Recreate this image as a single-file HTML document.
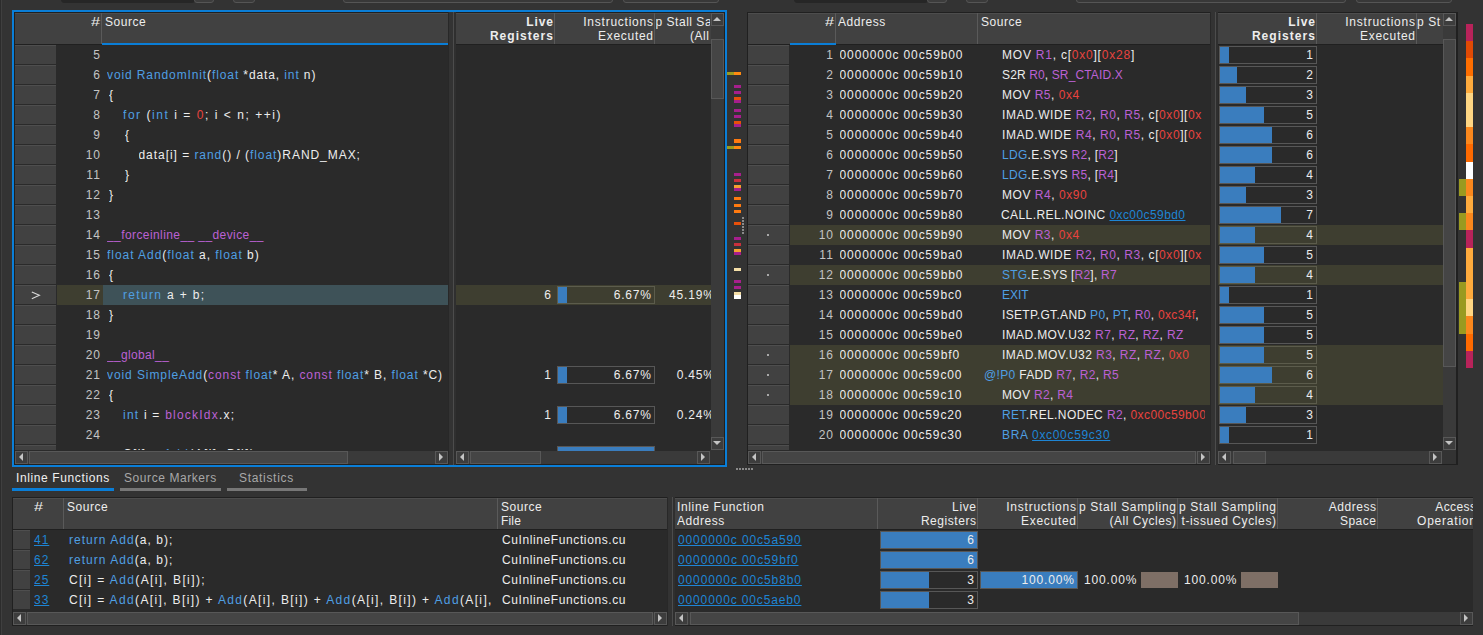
<!DOCTYPE html>
<html><head><meta charset="utf-8"><style>
html,body{margin:0;padding:0;width:1483px;height:635px;overflow:hidden;background:#333333}
body{position:relative;font-family:"Liberation Sans",sans-serif;font-size:12.0px}
body div{position:absolute;box-sizing:content-box}
.t{white-space:pre}
</style></head><body>
<div style="left:0px;top:0px;width:1483px;height:635px;background:#333333;"></div>
<div style="left:1px;top:0px;width:1px;height:635px;background:#3f3f3f;"></div>
<div style="left:0px;top:0px;width:1px;height:635px;background:#2c2c2c;"></div>
<div style="left:61px;top:-4px;width:132px;height:5px;border:1px solid #262626;background:#262626;border-radius:3px;"></div>
<div style="left:194px;top:-4px;width:18px;height:5px;border:1px solid #555555;background:#3c3c3c;border-radius:3px;"></div>
<div style="left:233px;top:-4px;width:20px;height:5px;border:1px solid #555555;background:#3a3a3a;border-radius:3px;"></div>
<div style="left:343px;top:-4px;width:268px;height:5px;border:1px solid #555555;background:#383838;border-radius:3px;"></div>
<div style="left:623px;top:-4px;width:94px;height:5px;border:1px solid #555555;background:#383838;border-radius:3px;"></div>
<div style="left:794px;top:-4px;width:132px;height:5px;border:1px solid #262626;background:#262626;border-radius:3px;"></div>
<div style="left:927px;top:-4px;width:18px;height:5px;border:1px solid #555555;background:#3c3c3c;border-radius:3px;"></div>
<div style="left:966px;top:-4px;width:20px;height:5px;border:1px solid #555555;background:#3a3a3a;border-radius:3px;"></div>
<div style="left:1076px;top:-4px;width:268px;height:5px;border:1px solid #555555;background:#383838;border-radius:3px;"></div>
<div style="left:1356px;top:-4px;width:94px;height:5px;border:1px solid #555555;background:#383838;border-radius:3px;"></div>
<div style="left:12px;top:10px;width:715px;height:457px;background:#0a7ed7;"></div>
<div style="left:14px;top:12px;width:711px;height:453px;background:#202020;"></div>
<div style="left:15px;top:13px;width:433px;height:438px;background:#2a2a2a;"></div>
<div style="left:15px;top:13px;width:87px;height:31px;background:#414141;"></div>
<div style="left:15px;top:13px;width:87px;height:1px;background:#4d4d4d;"></div>
<div style="left:101px;top:13px;width:1px;height:31px;background:#5a5a5a;"></div>
<div class="t" style="left:91px;top:12px;height:20px;line-height:20px;color:#ededed;transform:scaleX(1.35);transform-origin:0 0">#</div>
<div style="left:102px;top:13px;width:346px;height:31px;background:#414141;"></div>
<div style="left:102px;top:13px;width:346px;height:1px;background:#4d4d4d;"></div>
<div class="t" style="top:12px;height:20px;line-height:20px;letter-spacing:0.533px;color:#ededed;left:105px;width:342px;overflow:hidden;">Source</div>
<div style="left:15px;top:44px;width:433px;height:1px;background:#202020;"></div>
<div style="left:102px;top:43px;width:346px;height:2px;background:#0a7ed7;"></div>
<div style="left:15px;top:45px;width:41px;height:19px;background:#414141;"></div>
<div style="left:15px;top:45px;width:41px;height:1px;background:#4e4e4e;"></div>
<div class="t" style="top:45px;height:20px;line-height:20px;letter-spacing:0.961px;color:#c4c4c4;left:56.96px;width:44px;text-align:right;overflow:hidden;">5</div>
<div style="left:15px;top:65px;width:41px;height:19px;background:#414141;"></div>
<div style="left:15px;top:65px;width:41px;height:1px;background:#4e4e4e;"></div>
<div class="t" style="top:65px;height:20px;line-height:20px;letter-spacing:0.961px;color:#c4c4c4;left:56.96px;width:44px;text-align:right;overflow:hidden;">6</div>
<div class="t" style="top:65px;height:20px;line-height:20px;letter-spacing:0.891px;color:#ededed;left:107px;width:341px;overflow:hidden;"><span style="color:#4f9fe3">void</span> <span style="color:#4f9fe3">RandomInit</span>(<span style="color:#4f9fe3">float</span> *data, <span style="color:#4f9fe3">int</span> n)</div>
<div style="left:15px;top:85px;width:41px;height:19px;background:#414141;"></div>
<div style="left:15px;top:85px;width:41px;height:1px;background:#4e4e4e;"></div>
<div class="t" style="top:85px;height:20px;line-height:20px;letter-spacing:0.961px;color:#c4c4c4;left:56.96px;width:44px;text-align:right;overflow:hidden;">7</div>
<div class="t" style="top:85px;height:20px;line-height:20px;letter-spacing:3.627px;color:#ededed;left:109px;width:339px;overflow:hidden;">{</div>
<div style="left:15px;top:105px;width:41px;height:19px;background:#414141;"></div>
<div style="left:15px;top:105px;width:41px;height:1px;background:#4e4e4e;"></div>
<div class="t" style="top:105px;height:20px;line-height:20px;letter-spacing:0.961px;color:#c4c4c4;left:56.96px;width:44px;text-align:right;overflow:hidden;">8</div>
<div class="t" style="top:105px;height:20px;line-height:20px;letter-spacing:1.543px;color:#ededed;left:123px;width:325px;overflow:hidden;"><span style="color:#4f9fe3">for</span> (<span style="color:#4f9fe3">int</span> i = <span style="color:#e8433f">0</span>; i &lt; n; ++i)</div>
<div style="left:15px;top:125px;width:41px;height:19px;background:#414141;"></div>
<div style="left:15px;top:125px;width:41px;height:1px;background:#4e4e4e;"></div>
<div class="t" style="top:125px;height:20px;line-height:20px;letter-spacing:0.961px;color:#c4c4c4;left:56.96px;width:44px;text-align:right;overflow:hidden;">9</div>
<div class="t" style="top:125px;height:20px;line-height:20px;letter-spacing:3.627px;color:#ededed;left:125px;width:323px;overflow:hidden;">{</div>
<div style="left:15px;top:145px;width:41px;height:19px;background:#414141;"></div>
<div style="left:15px;top:145px;width:41px;height:1px;background:#4e4e4e;"></div>
<div class="t" style="top:145px;height:20px;line-height:20px;letter-spacing:0.961px;color:#c4c4c4;left:56.96px;width:44px;text-align:right;overflow:hidden;">10</div>
<div class="t" style="top:145px;height:20px;line-height:20px;letter-spacing:0.951px;color:#ededed;left:138.5px;width:309.5px;overflow:hidden;">data[i] = <span style="color:#4f9fe3">rand</span>() / (<span style="color:#4f9fe3">float</span>)RAND_MAX;</div>
<div style="left:15px;top:165px;width:41px;height:19px;background:#414141;"></div>
<div style="left:15px;top:165px;width:41px;height:1px;background:#4e4e4e;"></div>
<div class="t" style="top:165px;height:20px;line-height:20px;letter-spacing:1.406px;color:#c4c4c4;left:57.41px;width:44px;text-align:right;overflow:hidden;">11</div>
<div class="t" style="top:165px;height:20px;line-height:20px;letter-spacing:3.627px;color:#ededed;left:125px;width:323px;overflow:hidden;">}</div>
<div style="left:15px;top:185px;width:41px;height:19px;background:#414141;"></div>
<div style="left:15px;top:185px;width:41px;height:1px;background:#4e4e4e;"></div>
<div class="t" style="top:185px;height:20px;line-height:20px;letter-spacing:0.961px;color:#c4c4c4;left:56.96px;width:44px;text-align:right;overflow:hidden;">12</div>
<div class="t" style="top:185px;height:20px;line-height:20px;letter-spacing:3.627px;color:#ededed;left:109px;width:339px;overflow:hidden;">}</div>
<div style="left:15px;top:205px;width:41px;height:19px;background:#414141;"></div>
<div style="left:15px;top:205px;width:41px;height:1px;background:#4e4e4e;"></div>
<div class="t" style="top:205px;height:20px;line-height:20px;letter-spacing:0.961px;color:#c4c4c4;left:56.96px;width:44px;text-align:right;overflow:hidden;">13</div>
<div style="left:15px;top:225px;width:41px;height:19px;background:#414141;"></div>
<div style="left:15px;top:225px;width:41px;height:1px;background:#4e4e4e;"></div>
<div class="t" style="top:225px;height:20px;line-height:20px;letter-spacing:0.961px;color:#c4c4c4;left:56.96px;width:44px;text-align:right;overflow:hidden;">14</div>
<div class="t" style="top:225px;height:20px;line-height:20px;letter-spacing:0.412px;color:#ededed;left:107px;width:341px;overflow:hidden;"><span style="color:#bb61d4">__forceinline__ __device__</span></div>
<div style="left:15px;top:245px;width:41px;height:19px;background:#414141;"></div>
<div style="left:15px;top:245px;width:41px;height:1px;background:#4e4e4e;"></div>
<div class="t" style="top:245px;height:20px;line-height:20px;letter-spacing:0.961px;color:#c4c4c4;left:56.96px;width:44px;text-align:right;overflow:hidden;">15</div>
<div class="t" style="top:245px;height:20px;line-height:20px;letter-spacing:0.956px;color:#ededed;left:107px;width:341px;overflow:hidden;"><span style="color:#4f9fe3">float</span> <span style="color:#4f9fe3">Add</span>(<span style="color:#4f9fe3">float</span> a, <span style="color:#4f9fe3">float</span> b)</div>
<div style="left:15px;top:265px;width:41px;height:19px;background:#414141;"></div>
<div style="left:15px;top:265px;width:41px;height:1px;background:#4e4e4e;"></div>
<div class="t" style="top:265px;height:20px;line-height:20px;letter-spacing:0.961px;color:#c4c4c4;left:56.96px;width:44px;text-align:right;overflow:hidden;">16</div>
<div class="t" style="top:265px;height:20px;line-height:20px;letter-spacing:3.627px;color:#ededed;left:109px;width:339px;overflow:hidden;">{</div>
<div style="left:57px;top:285px;width:46px;height:20px;background:#3e3e30;"></div>
<div style="left:103px;top:285px;width:345px;height:20px;background:#3e5258;"></div>
<div style="left:15px;top:285px;width:41px;height:19px;background:#414141;"></div>
<div style="left:15px;top:285px;width:41px;height:1px;background:#4e4e4e;"></div>
<svg style="position:absolute;left:31px;top:291px" width="10" height="9" viewBox="0 0 10 9"><path d="M0.8 0.9 L8.4 4.3 L0.8 7.7" fill="none" stroke="#d8d8d8" stroke-width="1.1"/></svg>
<div class="t" style="top:285px;height:20px;line-height:20px;letter-spacing:0.961px;color:#c4c4c4;left:56.96px;width:44px;text-align:right;overflow:hidden;">17</div>
<div class="t" style="top:285px;height:20px;line-height:20px;letter-spacing:1.330px;color:#ededed;left:123px;width:325px;overflow:hidden;"><span style="color:#4f9fe3">return</span> a + b;</div>
<div style="left:15px;top:305px;width:41px;height:19px;background:#414141;"></div>
<div style="left:15px;top:305px;width:41px;height:1px;background:#4e4e4e;"></div>
<div class="t" style="top:305px;height:20px;line-height:20px;letter-spacing:0.961px;color:#c4c4c4;left:56.96px;width:44px;text-align:right;overflow:hidden;">18</div>
<div class="t" style="top:305px;height:20px;line-height:20px;letter-spacing:3.627px;color:#ededed;left:109px;width:339px;overflow:hidden;">}</div>
<div style="left:15px;top:325px;width:41px;height:19px;background:#414141;"></div>
<div style="left:15px;top:325px;width:41px;height:1px;background:#4e4e4e;"></div>
<div class="t" style="top:325px;height:20px;line-height:20px;letter-spacing:0.961px;color:#c4c4c4;left:56.96px;width:44px;text-align:right;overflow:hidden;">19</div>
<div style="left:15px;top:345px;width:41px;height:19px;background:#414141;"></div>
<div style="left:15px;top:345px;width:41px;height:1px;background:#4e4e4e;"></div>
<div class="t" style="top:345px;height:20px;line-height:20px;letter-spacing:0.961px;color:#c4c4c4;left:56.96px;width:44px;text-align:right;overflow:hidden;">20</div>
<div class="t" style="top:345px;height:20px;line-height:20px;letter-spacing:0.342px;color:#ededed;left:107px;width:341px;overflow:hidden;"><span style="color:#bb61d4">__global__</span></div>
<div style="left:15px;top:365px;width:41px;height:19px;background:#414141;"></div>
<div style="left:15px;top:365px;width:41px;height:1px;background:#4e4e4e;"></div>
<div class="t" style="top:365px;height:20px;line-height:20px;letter-spacing:0.961px;color:#c4c4c4;left:56.96px;width:44px;text-align:right;overflow:hidden;">21</div>
<div class="t" style="top:365px;height:20px;line-height:20px;letter-spacing:0.913px;color:#ededed;left:107px;width:341px;overflow:hidden;"><span style="color:#4f9fe3">void</span> <span style="color:#4f9fe3">SimpleAdd</span>(<span style="color:#bb61d4">const</span> <span style="color:#4f9fe3">float</span>* A, <span style="color:#bb61d4">const</span> <span style="color:#4f9fe3">float</span>* B, <span style="color:#4f9fe3">float</span> *C)</div>
<div style="left:15px;top:385px;width:41px;height:19px;background:#414141;"></div>
<div style="left:15px;top:385px;width:41px;height:1px;background:#4e4e4e;"></div>
<div class="t" style="top:385px;height:20px;line-height:20px;letter-spacing:0.961px;color:#c4c4c4;left:56.96px;width:44px;text-align:right;overflow:hidden;">22</div>
<div class="t" style="top:385px;height:20px;line-height:20px;letter-spacing:3.627px;color:#ededed;left:109px;width:339px;overflow:hidden;">{</div>
<div style="left:15px;top:405px;width:41px;height:19px;background:#414141;"></div>
<div style="left:15px;top:405px;width:41px;height:1px;background:#4e4e4e;"></div>
<div class="t" style="top:405px;height:20px;line-height:20px;letter-spacing:0.961px;color:#c4c4c4;left:56.96px;width:44px;text-align:right;overflow:hidden;">23</div>
<div class="t" style="top:405px;height:20px;line-height:20px;letter-spacing:1.220px;color:#ededed;left:123px;width:325px;overflow:hidden;"><span style="color:#4f9fe3">int</span> i = <span style="color:#bb61d4">blockIdx</span>.x;</div>
<div style="left:15px;top:425px;width:41px;height:19px;background:#414141;"></div>
<div style="left:15px;top:425px;width:41px;height:1px;background:#4e4e4e;"></div>
<div class="t" style="top:425px;height:20px;line-height:20px;letter-spacing:0.961px;color:#c4c4c4;left:56.96px;width:44px;text-align:right;overflow:hidden;">24</div>
<div style="left:15px;top:445px;width:433px;height:5px;overflow:hidden">
<div style="left:0px;top:0px;width:41px;height:5px;background:#414141;"></div>
<div style="left:0px;top:0px;width:41px;height:1px;background:#4e4e4e;"></div>
<div class="t" style="top:-1px;height:20px;line-height:20px;letter-spacing:1.389px;color:#ededed;left:108px;">C[i] = <span style="color:#4f9fe3">Add</span>(A[i], B[i]);</div>
</div>
<div style="left:15px;top:451px;width:433px;height:13px;background:#3a3a3a;"></div>
<div style="left:15px;top:451px;width:11px;height:11px;border:1px solid #585858;background:#3d3d3d;"></div>
<div style="left:19px;top:453px;width:0;height:0;border-top:4px solid transparent;border-bottom:4px solid transparent;border-right:4.5px solid #c4c4c4"></div>
<div style="left:29px;top:451px;width:317px;height:11px;border:1px solid #585858;background:#454545;"></div>
<div style="left:435px;top:451px;width:11px;height:11px;border:1px solid #585858;background:#3d3d3d;"></div>
<div style="left:439px;top:453px;width:0;height:0;border-top:4px solid transparent;border-bottom:4px solid transparent;border-left:4.5px solid #c4c4c4"></div>
<div style="left:448px;top:12px;width:8px;height:453px;background:#333333;"></div>
<div style="left:448px;top:12px;width:1px;height:453px;background:#282828;"></div>
<div style="left:453px;top:12px;width:1px;height:453px;background:#4c4c4c;"></div>
<div style="left:454px;top:12px;width:2px;height:453px;background:#2f2f2f;"></div>
<div style="left:456px;top:13px;width:255px;height:438px;background:#2a2a2a;"></div>
<div style="left:456px;top:13px;width:99px;height:31px;background:#414141;"></div>
<div style="left:456px;top:13px;width:99px;height:1px;background:#4d4d4d;"></div>
<div style="left:554px;top:13px;width:1px;height:31px;background:#5a5a5a;"></div>
<div class="t" style="top:12px;height:20px;line-height:20px;letter-spacing:0.928px;color:#ededed;font-weight:bold;left:456.93px;width:97px;text-align:right;overflow:hidden;">Live</div>
<div class="t" style="top:26px;height:20px;line-height:20px;letter-spacing:1.052px;color:#ededed;font-weight:bold;left:457.05px;width:97px;text-align:right;overflow:hidden;">Registers</div>
<div style="left:555px;top:13px;width:100px;height:31px;background:#414141;"></div>
<div style="left:555px;top:13px;width:100px;height:1px;background:#4d4d4d;"></div>
<div style="left:654px;top:13px;width:1px;height:31px;background:#5a5a5a;"></div>
<div class="t" style="top:12px;height:20px;line-height:20px;letter-spacing:0.760px;color:#ededed;left:555.76px;width:98px;text-align:right;overflow:hidden;">Instructions</div>
<div class="t" style="top:26px;height:20px;line-height:20px;letter-spacing:0.697px;color:#ededed;left:555.70px;width:98px;text-align:right;overflow:hidden;">Executed</div>
<div style="left:655px;top:13px;width:56px;height:31px;background:#414141;"></div>
<div style="left:655px;top:13px;width:56px;height:1px;background:#4d4d4d;"></div>
<div class="t" style="top:12px;height:20px;line-height:20px;letter-spacing:0.520px;color:#ededed;left:655.52px;width:54px;text-align:right;overflow:hidden;">p Stall Sa</div>
<div class="t" style="top:26px;height:20px;line-height:20px;letter-spacing:0.557px;color:#ededed;left:655.56px;width:54px;text-align:right;overflow:hidden;">(All</div>
<div style="left:456px;top:44px;width:255px;height:1px;background:#202020;"></div>
<div style="left:456px;top:285px;width:255px;height:20px;background:#3e3e30;"></div>
<div class="t" style="top:285px;height:20px;line-height:20px;letter-spacing:0.961px;color:#ededed;left:461.96px;width:90px;text-align:right;overflow:hidden;">6</div>
<div style="left:557px;top:286px;width:96px;height:16px;border:1px solid #5c5c4c;background:transparent;"></div>
<div style="left:558px;top:287px;width:9px;height:16px;background:#3a7dbe;"></div>
<div class="t" style="top:285px;height:20px;line-height:20px;letter-spacing:0.819px;color:#ededed;left:557.82px;width:94px;text-align:right;overflow:hidden;">6.67%</div>
<div class="t" style="top:285px;height:20px;line-height:20px;letter-spacing:0.843px;color:#ededed;left:658.84px;width:56px;text-align:right;overflow:hidden;">45.19%</div>
<div class="t" style="top:365px;height:20px;line-height:20px;letter-spacing:0.961px;color:#ededed;left:461.96px;width:90px;text-align:right;overflow:hidden;">1</div>
<div style="left:557px;top:366px;width:96px;height:16px;border:1px solid #575757;background:transparent;"></div>
<div style="left:558px;top:367px;width:9px;height:16px;background:#3a7dbe;"></div>
<div class="t" style="top:365px;height:20px;line-height:20px;letter-spacing:0.819px;color:#ededed;left:557.82px;width:94px;text-align:right;overflow:hidden;">6.67%</div>
<div class="t" style="top:365px;height:20px;line-height:20px;letter-spacing:0.819px;color:#ededed;left:658.82px;width:56px;text-align:right;overflow:hidden;">0.45%</div>
<div class="t" style="top:405px;height:20px;line-height:20px;letter-spacing:0.961px;color:#ededed;left:461.96px;width:90px;text-align:right;overflow:hidden;">1</div>
<div style="left:557px;top:406px;width:96px;height:16px;border:1px solid #575757;background:transparent;"></div>
<div style="left:558px;top:407px;width:9px;height:16px;background:#3a7dbe;"></div>
<div class="t" style="top:405px;height:20px;line-height:20px;letter-spacing:0.819px;color:#ededed;left:557.82px;width:94px;text-align:right;overflow:hidden;">6.67%</div>
<div class="t" style="top:405px;height:20px;line-height:20px;letter-spacing:0.819px;color:#ededed;left:658.82px;width:56px;text-align:right;overflow:hidden;">0.24%</div>
<div style="left:456px;top:445px;width:255px;height:6px;overflow:hidden">
<div style="left:101px;top:1px;width:96px;height:16px;border:1px solid #575757;background:transparent;"></div>
<div style="left:102px;top:2px;width:96px;height:16px;background:#3a7dbe;"></div>
</div>
<div style="left:456px;top:451px;width:254px;height:13px;background:#3a3a3a;"></div>
<div style="left:456px;top:451px;width:11px;height:11px;border:1px solid #585858;background:#3d3d3d;"></div>
<div style="left:460px;top:453px;width:0;height:0;border-top:4px solid transparent;border-bottom:4px solid transparent;border-right:4.5px solid #c4c4c4"></div>
<div style="left:470px;top:451px;width:69px;height:11px;border:1px solid #585858;background:#454545;"></div>
<div style="left:697px;top:451px;width:11px;height:11px;border:1px solid #585858;background:#3d3d3d;"></div>
<div style="left:701px;top:453px;width:0;height:0;border-top:4px solid transparent;border-bottom:4px solid transparent;border-left:4.5px solid #c4c4c4"></div>
<div style="left:711px;top:13px;width:13px;height:437px;background:#3a3a3a;"></div>
<div style="left:711px;top:13px;width:11px;height:11px;border:1px solid #585858;background:#3d3d3d;"></div>
<div style="left:713px;top:17px;width:0;height:0;border-left:4px solid transparent;border-right:4px solid transparent;border-bottom:4.5px solid #c4c4c4"></div>
<div style="left:711px;top:39px;width:11px;height:58px;border:1px solid #585858;background:#454545;"></div>
<div style="left:711px;top:437px;width:11px;height:11px;border:1px solid #585858;background:#3d3d3d;"></div>
<div style="left:713px;top:441px;width:0;height:0;border-left:4px solid transparent;border-right:4px solid transparent;border-top:4.5px solid #c4c4c4"></div>
<div style="left:710px;top:450px;width:14px;height:14px;background:#333333;"></div>
<div style="left:727px;top:72px;width:7px;height:3px;background:#9a9a20;"></div>
<div style="left:734px;top:72px;width:7px;height:3px;background:#ff8a10;"></div>
<div style="left:734px;top:85px;width:7px;height:3px;background:#a61f8c;"></div>
<div style="left:734px;top:91px;width:7px;height:3px;background:#a61f8c;"></div>
<div style="left:734px;top:97px;width:7px;height:3px;background:#e8500a;"></div>
<div style="left:734px;top:100px;width:7px;height:3px;background:#a61f8c;"></div>
<div style="left:734px;top:109px;width:7px;height:3px;background:#a61f8c;"></div>
<div style="left:734px;top:115px;width:7px;height:3px;background:#a61f8c;"></div>
<div style="left:734px;top:121px;width:7px;height:3px;background:#e8500a;"></div>
<div style="left:734px;top:124px;width:7px;height:3px;background:#a61f8c;"></div>
<div style="left:734px;top:139px;width:7px;height:4px;background:#ff7a10;"></div>
<div style="left:727px;top:146px;width:7px;height:3px;background:#9a9a20;"></div>
<div style="left:734px;top:146px;width:7px;height:3px;background:#ff8a10;"></div>
<div style="left:734px;top:173px;width:7px;height:3px;background:#a61f8c;"></div>
<div style="left:734px;top:179px;width:7px;height:3px;background:#c8303c;"></div>
<div style="left:734px;top:185px;width:7px;height:3px;background:#f5a030;"></div>
<div style="left:734px;top:188px;width:7px;height:3px;background:#a61f8c;"></div>
<div style="left:734px;top:197px;width:7px;height:3px;background:#ff7a10;"></div>
<div style="left:734px;top:204px;width:7px;height:3px;background:#ff7a10;"></div>
<div style="left:734px;top:210px;width:7px;height:3px;background:#ff7a10;"></div>
<div style="left:734px;top:222px;width:7px;height:3px;background:#e8500a;"></div>
<div style="left:734px;top:237px;width:7px;height:3px;background:#a61f8c;"></div>
<div style="left:734px;top:243px;width:7px;height:3px;background:#c8303c;"></div>
<div style="left:734px;top:249px;width:7px;height:3px;background:#f5a030;"></div>
<div style="left:734px;top:252px;width:7px;height:3px;background:#a61f8c;"></div>
<div style="left:734px;top:268px;width:7px;height:3px;background:#f5dfa8;"></div>
<div style="left:734px;top:280px;width:7px;height:3px;background:#a61f8c;"></div>
<div style="left:734px;top:286px;width:7px;height:3px;background:#a61f8c;"></div>
<div style="left:734px;top:292px;width:7px;height:3px;background:#f5dfa8;"></div>
<div style="left:734px;top:295px;width:7px;height:4px;background:#ffffff;"></div>
<div style="left:742px;top:217px;width:2px;height:2px;background:#8a8a8a;"></div>
<div style="left:742px;top:220px;width:2px;height:2px;background:#8a8a8a;"></div>
<div style="left:742px;top:223px;width:2px;height:2px;background:#8a8a8a;"></div>
<div style="left:742px;top:226px;width:2px;height:2px;background:#8a8a8a;"></div>
<div style="left:742px;top:229px;width:2px;height:2px;background:#8a8a8a;"></div>
<div style="left:742px;top:232px;width:2px;height:2px;background:#8a8a8a;"></div>
<div style="left:736px;top:468px;width:2px;height:2px;background:#8a8a8a;"></div>
<div style="left:739px;top:468px;width:2px;height:2px;background:#8a8a8a;"></div>
<div style="left:742px;top:468px;width:2px;height:2px;background:#8a8a8a;"></div>
<div style="left:745px;top:468px;width:2px;height:2px;background:#8a8a8a;"></div>
<div style="left:748px;top:468px;width:2px;height:2px;background:#8a8a8a;"></div>
<div style="left:751px;top:468px;width:2px;height:2px;background:#8a8a8a;"></div>
<div style="left:747px;top:12px;width:711px;height:453px;background:#202020;"></div>
<div style="left:748px;top:13px;width:462px;height:438px;background:#2a2a2a;"></div>
<div style="left:748px;top:13px;width:88px;height:31px;background:#414141;"></div>
<div style="left:748px;top:13px;width:88px;height:1px;background:#4d4d4d;"></div>
<div style="left:835px;top:13px;width:1px;height:31px;background:#5a5a5a;"></div>
<div class="t" style="left:825px;top:12px;height:20px;line-height:20px;color:#ededed;transform:scaleX(1.35);transform-origin:0 0">#</div>
<div style="left:836px;top:13px;width:142px;height:31px;background:#414141;"></div>
<div style="left:836px;top:13px;width:142px;height:1px;background:#4d4d4d;"></div>
<div style="left:977px;top:13px;width:1px;height:31px;background:#5a5a5a;"></div>
<div class="t" style="top:12px;height:20px;line-height:20px;letter-spacing:0.538px;color:#ededed;left:838px;width:139px;overflow:hidden;">Address</div>
<div style="left:978px;top:13px;width:232px;height:31px;background:#414141;"></div>
<div style="left:978px;top:13px;width:232px;height:1px;background:#4d4d4d;"></div>
<div class="t" style="top:12px;height:20px;line-height:20px;letter-spacing:0.533px;color:#ededed;left:981px;width:228px;overflow:hidden;">Source</div>
<div style="left:748px;top:44px;width:462px;height:1px;background:#202020;"></div>
<div style="left:790px;top:43px;width:46px;height:2px;background:#0a7ed7;"></div>
<div style="left:748px;top:45px;width:41px;height:19px;background:#414141;"></div>
<div style="left:748px;top:45px;width:41px;height:1px;background:#4e4e4e;"></div>
<div class="t" style="top:45px;height:20px;line-height:20px;letter-spacing:0.961px;color:#c4c4c4;left:789.96px;width:44px;text-align:right;overflow:hidden;">1</div>
<div class="t" style="top:45px;height:20px;line-height:20px;letter-spacing:0.889px;color:#ededed;left:839.5px;width:137px;overflow:hidden;">0000000c 00c59b00</div>
<div class="t" style="left:1002px;top:45px;width:203px;height:20px;line-height:20px;overflow:hidden;letter-spacing:0.776px;color:#ededed"><span style="color:#ededed">MOV </span><span style="color:#bb61d4">R1</span><span style="color:#ededed">, c[</span><span style="color:#e8433f">0x0</span><span style="color:#ededed">]</span><span style="color:#ededed">[</span><span style="color:#e8433f">0x28</span><span style="color:#ededed">]</span></div>
<div style="left:748px;top:65px;width:41px;height:19px;background:#414141;"></div>
<div style="left:748px;top:65px;width:41px;height:1px;background:#4e4e4e;"></div>
<div class="t" style="top:65px;height:20px;line-height:20px;letter-spacing:0.961px;color:#c4c4c4;left:789.96px;width:44px;text-align:right;overflow:hidden;">2</div>
<div class="t" style="top:65px;height:20px;line-height:20px;letter-spacing:0.889px;color:#ededed;left:839.5px;width:137px;overflow:hidden;">0000000c 00c59b10</div>
<div class="t" style="left:1002px;top:65px;width:203px;height:20px;line-height:20px;overflow:hidden;letter-spacing:0.127px;color:#ededed"><span style="color:#ededed">S2R </span><span style="color:#bb61d4">R0</span><span style="color:#ededed">, </span><span style="color:#bb61d4">SR_CTAID.X</span></div>
<div style="left:748px;top:85px;width:41px;height:19px;background:#414141;"></div>
<div style="left:748px;top:85px;width:41px;height:1px;background:#4e4e4e;"></div>
<div class="t" style="top:85px;height:20px;line-height:20px;letter-spacing:0.961px;color:#c4c4c4;left:789.96px;width:44px;text-align:right;overflow:hidden;">3</div>
<div class="t" style="top:85px;height:20px;line-height:20px;letter-spacing:0.889px;color:#ededed;left:839.5px;width:137px;overflow:hidden;">0000000c 00c59b20</div>
<div class="t" style="left:1002px;top:85px;width:203px;height:20px;line-height:20px;overflow:hidden;letter-spacing:0.505px;color:#ededed"><span style="color:#ededed">MOV </span><span style="color:#bb61d4">R5</span><span style="color:#ededed">, </span><span style="color:#e8433f">0x4</span></div>
<div style="left:748px;top:105px;width:41px;height:19px;background:#414141;"></div>
<div style="left:748px;top:105px;width:41px;height:1px;background:#4e4e4e;"></div>
<div class="t" style="top:105px;height:20px;line-height:20px;letter-spacing:0.961px;color:#c4c4c4;left:789.96px;width:44px;text-align:right;overflow:hidden;">4</div>
<div class="t" style="top:105px;height:20px;line-height:20px;letter-spacing:0.889px;color:#ededed;left:839.5px;width:137px;overflow:hidden;">0000000c 00c59b30</div>
<div class="t" style="left:1002px;top:105px;width:203px;height:20px;line-height:20px;overflow:hidden;letter-spacing:0.571px;color:#ededed"><span style="color:#ededed">IMAD.WIDE </span><span style="color:#bb61d4">R2</span><span style="color:#ededed">, </span><span style="color:#bb61d4">R0</span><span style="color:#ededed">, </span><span style="color:#bb61d4">R5</span><span style="color:#ededed">, c[</span><span style="color:#e8433f">0x0</span><span style="color:#ededed">]</span><span style="color:#ededed">[</span><span style="color:#e8433f">0x</span></div>
<div style="left:748px;top:125px;width:41px;height:19px;background:#414141;"></div>
<div style="left:748px;top:125px;width:41px;height:1px;background:#4e4e4e;"></div>
<div class="t" style="top:125px;height:20px;line-height:20px;letter-spacing:0.961px;color:#c4c4c4;left:789.96px;width:44px;text-align:right;overflow:hidden;">5</div>
<div class="t" style="top:125px;height:20px;line-height:20px;letter-spacing:0.889px;color:#ededed;left:839.5px;width:137px;overflow:hidden;">0000000c 00c59b40</div>
<div class="t" style="left:1002px;top:125px;width:203px;height:20px;line-height:20px;overflow:hidden;letter-spacing:0.571px;color:#ededed"><span style="color:#ededed">IMAD.WIDE </span><span style="color:#bb61d4">R4</span><span style="color:#ededed">, </span><span style="color:#bb61d4">R0</span><span style="color:#ededed">, </span><span style="color:#bb61d4">R5</span><span style="color:#ededed">, c[</span><span style="color:#e8433f">0x0</span><span style="color:#ededed">]</span><span style="color:#ededed">[</span><span style="color:#e8433f">0x</span></div>
<div style="left:748px;top:145px;width:41px;height:19px;background:#414141;"></div>
<div style="left:748px;top:145px;width:41px;height:1px;background:#4e4e4e;"></div>
<div class="t" style="top:145px;height:20px;line-height:20px;letter-spacing:0.961px;color:#c4c4c4;left:789.96px;width:44px;text-align:right;overflow:hidden;">6</div>
<div class="t" style="top:145px;height:20px;line-height:20px;letter-spacing:0.889px;color:#ededed;left:839.5px;width:137px;overflow:hidden;">0000000c 00c59b50</div>
<div class="t" style="left:1002px;top:145px;width:203px;height:20px;line-height:20px;overflow:hidden;letter-spacing:0.280px;color:#ededed"><span style="color:#4f9fe3">LDG</span><span style="color:#ededed">.E.SYS </span><span style="color:#bb61d4">R2</span><span style="color:#ededed">, [</span><span style="color:#bb61d4">R2</span><span style="color:#ededed">]</span></div>
<div style="left:748px;top:165px;width:41px;height:19px;background:#414141;"></div>
<div style="left:748px;top:165px;width:41px;height:1px;background:#4e4e4e;"></div>
<div class="t" style="top:165px;height:20px;line-height:20px;letter-spacing:0.961px;color:#c4c4c4;left:789.96px;width:44px;text-align:right;overflow:hidden;">7</div>
<div class="t" style="top:165px;height:20px;line-height:20px;letter-spacing:0.889px;color:#ededed;left:839.5px;width:137px;overflow:hidden;">0000000c 00c59b60</div>
<div class="t" style="left:1002px;top:165px;width:203px;height:20px;line-height:20px;overflow:hidden;letter-spacing:0.280px;color:#ededed"><span style="color:#4f9fe3">LDG</span><span style="color:#ededed">.E.SYS </span><span style="color:#bb61d4">R5</span><span style="color:#ededed">, [</span><span style="color:#bb61d4">R4</span><span style="color:#ededed">]</span></div>
<div style="left:748px;top:185px;width:41px;height:19px;background:#414141;"></div>
<div style="left:748px;top:185px;width:41px;height:1px;background:#4e4e4e;"></div>
<div class="t" style="top:185px;height:20px;line-height:20px;letter-spacing:0.961px;color:#c4c4c4;left:789.96px;width:44px;text-align:right;overflow:hidden;">8</div>
<div class="t" style="top:185px;height:20px;line-height:20px;letter-spacing:0.889px;color:#ededed;left:839.5px;width:137px;overflow:hidden;">0000000c 00c59b70</div>
<div class="t" style="left:1002px;top:185px;width:203px;height:20px;line-height:20px;overflow:hidden;letter-spacing:0.543px;color:#ededed"><span style="color:#ededed">MOV </span><span style="color:#bb61d4">R4</span><span style="color:#ededed">, </span><span style="color:#e8433f">0x90</span></div>
<div style="left:748px;top:205px;width:41px;height:19px;background:#414141;"></div>
<div style="left:748px;top:205px;width:41px;height:1px;background:#4e4e4e;"></div>
<div class="t" style="top:205px;height:20px;line-height:20px;letter-spacing:0.961px;color:#c4c4c4;left:789.96px;width:44px;text-align:right;overflow:hidden;">9</div>
<div class="t" style="top:205px;height:20px;line-height:20px;letter-spacing:0.889px;color:#ededed;left:839.5px;width:137px;overflow:hidden;">0000000c 00c59b80</div>
<div class="t" style="left:1001px;top:205px;width:204px;height:20px;line-height:20px;overflow:hidden;letter-spacing:0.425px;color:#ededed"><span style="color:#ededed">CALL.REL.NOINC </span><span style="color:#1e85d4;text-decoration:underline">0xc00c59bd0</span></div>
<div style="left:790px;top:225px;width:420px;height:20px;background:#3e3e30;"></div>
<div style="left:748px;top:225px;width:41px;height:19px;background:#414141;"></div>
<div style="left:748px;top:225px;width:41px;height:1px;background:#4e4e4e;"></div>
<div style="left:767px;top:234px;width:2px;height:2px;background:#a8a8a8;"></div>
<div class="t" style="top:225px;height:20px;line-height:20px;letter-spacing:0.961px;color:#c4c4c4;left:789.96px;width:44px;text-align:right;overflow:hidden;">10</div>
<div class="t" style="top:225px;height:20px;line-height:20px;letter-spacing:0.889px;color:#ededed;left:839.5px;width:137px;overflow:hidden;">0000000c 00c59b90</div>
<div class="t" style="left:1002px;top:225px;width:203px;height:20px;line-height:20px;overflow:hidden;letter-spacing:0.505px;color:#ededed"><span style="color:#ededed">MOV </span><span style="color:#bb61d4">R3</span><span style="color:#ededed">, </span><span style="color:#e8433f">0x4</span></div>
<div style="left:748px;top:245px;width:41px;height:19px;background:#414141;"></div>
<div style="left:748px;top:245px;width:41px;height:1px;background:#4e4e4e;"></div>
<div class="t" style="top:245px;height:20px;line-height:20px;letter-spacing:1.406px;color:#c4c4c4;left:790.41px;width:44px;text-align:right;overflow:hidden;">11</div>
<div class="t" style="top:245px;height:20px;line-height:20px;letter-spacing:0.872px;color:#ededed;left:839.5px;width:137px;overflow:hidden;">0000000c 00c59ba0</div>
<div class="t" style="left:1002px;top:245px;width:203px;height:20px;line-height:20px;overflow:hidden;letter-spacing:0.571px;color:#ededed"><span style="color:#ededed">IMAD.WIDE </span><span style="color:#bb61d4">R2</span><span style="color:#ededed">, </span><span style="color:#bb61d4">R0</span><span style="color:#ededed">, </span><span style="color:#bb61d4">R3</span><span style="color:#ededed">, c[</span><span style="color:#e8433f">0x0</span><span style="color:#ededed">]</span><span style="color:#ededed">[</span><span style="color:#e8433f">0x</span></div>
<div style="left:790px;top:265px;width:420px;height:20px;background:#3e3e30;"></div>
<div style="left:748px;top:265px;width:41px;height:19px;background:#414141;"></div>
<div style="left:748px;top:265px;width:41px;height:1px;background:#4e4e4e;"></div>
<div style="left:767px;top:274px;width:2px;height:2px;background:#a8a8a8;"></div>
<div class="t" style="top:265px;height:20px;line-height:20px;letter-spacing:0.961px;color:#c4c4c4;left:789.96px;width:44px;text-align:right;overflow:hidden;">12</div>
<div class="t" style="top:265px;height:20px;line-height:20px;letter-spacing:0.888px;color:#ededed;left:839.5px;width:137px;overflow:hidden;">0000000c 00c59bb0</div>
<div class="t" style="left:1002px;top:265px;width:203px;height:20px;line-height:20px;overflow:hidden;letter-spacing:0.226px;color:#ededed"><span style="color:#4f9fe3">STG</span><span style="color:#ededed">.E.SYS [</span><span style="color:#bb61d4">R2</span><span style="color:#ededed">], </span><span style="color:#bb61d4">R7</span></div>
<div style="left:748px;top:285px;width:41px;height:19px;background:#414141;"></div>
<div style="left:748px;top:285px;width:41px;height:1px;background:#4e4e4e;"></div>
<div class="t" style="top:285px;height:20px;line-height:20px;letter-spacing:0.961px;color:#c4c4c4;left:789.96px;width:44px;text-align:right;overflow:hidden;">13</div>
<div class="t" style="top:285px;height:20px;line-height:20px;letter-spacing:0.868px;color:#ededed;left:839.5px;width:137px;overflow:hidden;">0000000c 00c59bc0</div>
<div class="t" style="left:1002px;top:285px;width:203px;height:20px;line-height:20px;overflow:hidden;letter-spacing:-0.000px;color:#ededed"><span style="color:#4f9fe3">EXIT</span></div>
<div style="left:748px;top:305px;width:41px;height:19px;background:#414141;"></div>
<div style="left:748px;top:305px;width:41px;height:1px;background:#4e4e4e;"></div>
<div class="t" style="top:305px;height:20px;line-height:20px;letter-spacing:0.961px;color:#c4c4c4;left:789.96px;width:44px;text-align:right;overflow:hidden;">14</div>
<div class="t" style="top:305px;height:20px;line-height:20px;letter-spacing:0.888px;color:#ededed;left:839.5px;width:137px;overflow:hidden;">0000000c 00c59bd0</div>
<div class="t" style="left:1002px;top:305px;width:203px;height:20px;line-height:20px;overflow:hidden;letter-spacing:0.326px;color:#ededed"><span style="color:#ededed">ISETP.GT.AND </span><span style="color:#4f9fe3">P0</span><span style="color:#ededed">, </span><span style="color:#4f9fe3">PT</span><span style="color:#ededed">, </span><span style="color:#bb61d4">R0</span><span style="color:#ededed">, </span><span style="color:#e8433f">0xc34f</span><span style="color:#ededed">, </span></div>
<div style="left:748px;top:325px;width:41px;height:19px;background:#414141;"></div>
<div style="left:748px;top:325px;width:41px;height:1px;background:#4e4e4e;"></div>
<div class="t" style="top:325px;height:20px;line-height:20px;letter-spacing:0.961px;color:#c4c4c4;left:789.96px;width:44px;text-align:right;overflow:hidden;">15</div>
<div class="t" style="top:325px;height:20px;line-height:20px;letter-spacing:0.874px;color:#ededed;left:839.5px;width:137px;overflow:hidden;">0000000c 00c59be0</div>
<div class="t" style="left:1002px;top:325px;width:203px;height:20px;line-height:20px;overflow:hidden;letter-spacing:0.372px;color:#ededed"><span style="color:#ededed">IMAD.MOV.U32 </span><span style="color:#bb61d4">R7</span><span style="color:#ededed">, </span><span style="color:#bb61d4">RZ</span><span style="color:#ededed">, </span><span style="color:#bb61d4">RZ</span><span style="color:#ededed">, </span><span style="color:#bb61d4">RZ</span></div>
<div style="left:790px;top:345px;width:420px;height:20px;background:#3e3e30;"></div>
<div style="left:748px;top:345px;width:41px;height:19px;background:#414141;"></div>
<div style="left:748px;top:345px;width:41px;height:1px;background:#4e4e4e;"></div>
<div style="left:767px;top:354px;width:2px;height:2px;background:#a8a8a8;"></div>
<div class="t" style="top:345px;height:20px;line-height:20px;letter-spacing:0.961px;color:#c4c4c4;left:789.96px;width:44px;text-align:right;overflow:hidden;">16</div>
<div class="t" style="top:345px;height:20px;line-height:20px;letter-spacing:0.885px;color:#ededed;left:839.5px;width:137px;overflow:hidden;">0000000c 00c59bf0</div>
<div class="t" style="left:1002px;top:345px;width:203px;height:20px;line-height:20px;overflow:hidden;letter-spacing:0.446px;color:#ededed"><span style="color:#ededed">IMAD.MOV.U32 </span><span style="color:#bb61d4">R3</span><span style="color:#ededed">, </span><span style="color:#bb61d4">RZ</span><span style="color:#ededed">, </span><span style="color:#bb61d4">RZ</span><span style="color:#ededed">, </span><span style="color:#e8433f">0x0</span></div>
<div style="left:790px;top:365px;width:420px;height:20px;background:#3e3e30;"></div>
<div style="left:748px;top:365px;width:41px;height:19px;background:#414141;"></div>
<div style="left:748px;top:365px;width:41px;height:1px;background:#4e4e4e;"></div>
<div style="left:767px;top:374px;width:2px;height:2px;background:#a8a8a8;"></div>
<div class="t" style="top:365px;height:20px;line-height:20px;letter-spacing:0.961px;color:#c4c4c4;left:789.96px;width:44px;text-align:right;overflow:hidden;">17</div>
<div class="t" style="top:365px;height:20px;line-height:20px;letter-spacing:0.869px;color:#ededed;left:839.5px;width:137px;overflow:hidden;">0000000c 00c59c00</div>
<div class="t" style="left:984px;top:365px;width:221px;height:20px;line-height:20px;overflow:hidden;letter-spacing:0.338px;color:#ededed"><span style="color:#4f9fe3">@!P0</span><span style="color:#ededed"> FADD </span><span style="color:#bb61d4">R7</span><span style="color:#ededed">, </span><span style="color:#bb61d4">R2</span><span style="color:#ededed">, </span><span style="color:#bb61d4">R5</span></div>
<div style="left:790px;top:385px;width:420px;height:20px;background:#3e3e30;"></div>
<div style="left:748px;top:385px;width:41px;height:19px;background:#414141;"></div>
<div style="left:748px;top:385px;width:41px;height:1px;background:#4e4e4e;"></div>
<div style="left:767px;top:394px;width:2px;height:2px;background:#a8a8a8;"></div>
<div class="t" style="top:385px;height:20px;line-height:20px;letter-spacing:0.961px;color:#c4c4c4;left:789.96px;width:44px;text-align:right;overflow:hidden;">18</div>
<div class="t" style="top:385px;height:20px;line-height:20px;letter-spacing:0.869px;color:#ededed;left:839.5px;width:137px;overflow:hidden;">0000000c 00c59c10</div>
<div class="t" style="left:1002px;top:385px;width:203px;height:20px;line-height:20px;overflow:hidden;letter-spacing:0.317px;color:#ededed"><span style="color:#ededed">MOV </span><span style="color:#bb61d4">R2</span><span style="color:#ededed">, </span><span style="color:#bb61d4">R4</span></div>
<div style="left:748px;top:405px;width:41px;height:19px;background:#414141;"></div>
<div style="left:748px;top:405px;width:41px;height:1px;background:#4e4e4e;"></div>
<div class="t" style="top:405px;height:20px;line-height:20px;letter-spacing:0.961px;color:#c4c4c4;left:789.96px;width:44px;text-align:right;overflow:hidden;">19</div>
<div class="t" style="top:405px;height:20px;line-height:20px;letter-spacing:0.869px;color:#ededed;left:839.5px;width:137px;overflow:hidden;">0000000c 00c59c20</div>
<div class="t" style="left:1002px;top:405px;width:203px;height:20px;line-height:20px;overflow:hidden;letter-spacing:0.396px;color:#ededed"><span style="color:#4f9fe3">RET</span><span style="color:#ededed">.REL.NODEC </span><span style="color:#bb61d4">R2</span><span style="color:#ededed">, </span><span style="color:#e8433f">0xc00c59b00</span></div>
<div style="left:748px;top:425px;width:41px;height:19px;background:#414141;"></div>
<div style="left:748px;top:425px;width:41px;height:1px;background:#4e4e4e;"></div>
<div class="t" style="top:425px;height:20px;line-height:20px;letter-spacing:0.961px;color:#c4c4c4;left:789.96px;width:44px;text-align:right;overflow:hidden;">20</div>
<div class="t" style="top:425px;height:20px;line-height:20px;letter-spacing:0.869px;color:#ededed;left:839.5px;width:137px;overflow:hidden;">0000000c 00c59c30</div>
<div class="t" style="left:1002px;top:425px;width:203px;height:20px;line-height:20px;overflow:hidden;letter-spacing:0.678px;color:#ededed"><span style="color:#4f9fe3">BRA </span><span style="color:#1e85d4;text-decoration:underline">0xc00c59c30</span></div>
<div style="left:748px;top:445px;width:41px;height:5px;background:#414141;"></div>
<div style="left:748px;top:445px;width:41px;height:1px;background:#4e4e4e;"></div>
<div style="left:748px;top:451px;width:462px;height:13px;background:#3a3a3a;"></div>
<div style="left:748px;top:451px;width:11px;height:11px;border:1px solid #585858;background:#3d3d3d;"></div>
<div style="left:752px;top:453px;width:0;height:0;border-top:4px solid transparent;border-bottom:4px solid transparent;border-right:4.5px solid #c4c4c4"></div>
<div style="left:762px;top:451px;width:432px;height:11px;border:1px solid #585858;background:#454545;"></div>
<div style="left:1197px;top:451px;width:11px;height:11px;border:1px solid #585858;background:#3d3d3d;"></div>
<div style="left:1201px;top:453px;width:0;height:0;border-top:4px solid transparent;border-bottom:4px solid transparent;border-left:4.5px solid #c4c4c4"></div>
<div style="left:1210px;top:12px;width:8px;height:453px;background:#333333;"></div>
<div style="left:1210px;top:12px;width:1px;height:453px;background:#282828;"></div>
<div style="left:1215px;top:12px;width:1px;height:453px;background:#4c4c4c;"></div>
<div style="left:1216px;top:12px;width:2px;height:453px;background:#2f2f2f;"></div>
<div style="left:1218px;top:13px;width:225px;height:438px;background:#2a2a2a;"></div>
<div style="left:1218px;top:13px;width:99px;height:31px;background:#414141;"></div>
<div style="left:1218px;top:13px;width:99px;height:1px;background:#4d4d4d;"></div>
<div style="left:1316px;top:13px;width:1px;height:31px;background:#5a5a5a;"></div>
<div class="t" style="top:12px;height:20px;line-height:20px;letter-spacing:0.928px;color:#ededed;font-weight:bold;left:1218.93px;width:97px;text-align:right;overflow:hidden;">Live</div>
<div class="t" style="top:26px;height:20px;line-height:20px;letter-spacing:1.052px;color:#ededed;font-weight:bold;left:1219.05px;width:97px;text-align:right;overflow:hidden;">Registers</div>
<div style="left:1317px;top:13px;width:100px;height:31px;background:#414141;"></div>
<div style="left:1317px;top:13px;width:100px;height:1px;background:#4d4d4d;"></div>
<div style="left:1416px;top:13px;width:1px;height:31px;background:#5a5a5a;"></div>
<div class="t" style="top:12px;height:20px;line-height:20px;letter-spacing:0.760px;color:#ededed;left:1317.76px;width:98px;text-align:right;overflow:hidden;">Instructions</div>
<div class="t" style="top:26px;height:20px;line-height:20px;letter-spacing:0.697px;color:#ededed;left:1317.70px;width:98px;text-align:right;overflow:hidden;">Executed</div>
<div style="left:1417px;top:13px;width:26px;height:31px;background:#414141;"></div>
<div style="left:1417px;top:13px;width:26px;height:1px;background:#4d4d4d;"></div>
<div class="t" style="top:12px;height:20px;line-height:20px;letter-spacing:0.602px;color:#ededed;left:1417px;width:25px;overflow:hidden;">p St</div>
<div class="t" style="top:26px;height:20px;line-height:20px;letter-spacing:0.000px;color:#ededed;left:1417px;width:25px;overflow:hidden;"></div>
<div style="left:1218px;top:44px;width:225px;height:1px;background:#202020;"></div>
<div style="left:1219px;top:46px;width:96px;height:16px;border:1px solid #575757;background:transparent;"></div>
<div style="left:1220px;top:47px;width:9px;height:16px;background:#3a7dbe;"></div>
<div class="t" style="top:45px;height:20px;line-height:20px;letter-spacing:0.961px;color:#ededed;left:1219.96px;width:94px;text-align:right;overflow:hidden;">1</div>
<div style="left:1219px;top:66px;width:96px;height:16px;border:1px solid #575757;background:transparent;"></div>
<div style="left:1220px;top:67px;width:17px;height:16px;background:#3a7dbe;"></div>
<div class="t" style="top:65px;height:20px;line-height:20px;letter-spacing:0.961px;color:#ededed;left:1219.96px;width:94px;text-align:right;overflow:hidden;">2</div>
<div style="left:1219px;top:86px;width:96px;height:16px;border:1px solid #575757;background:transparent;"></div>
<div style="left:1220px;top:87px;width:26px;height:16px;background:#3a7dbe;"></div>
<div class="t" style="top:85px;height:20px;line-height:20px;letter-spacing:0.961px;color:#ededed;left:1219.96px;width:94px;text-align:right;overflow:hidden;">3</div>
<div style="left:1219px;top:106px;width:96px;height:16px;border:1px solid #575757;background:transparent;"></div>
<div style="left:1220px;top:107px;width:44px;height:16px;background:#3a7dbe;"></div>
<div class="t" style="top:105px;height:20px;line-height:20px;letter-spacing:0.961px;color:#ededed;left:1219.96px;width:94px;text-align:right;overflow:hidden;">5</div>
<div style="left:1219px;top:126px;width:96px;height:16px;border:1px solid #575757;background:transparent;"></div>
<div style="left:1220px;top:127px;width:52px;height:16px;background:#3a7dbe;"></div>
<div class="t" style="top:125px;height:20px;line-height:20px;letter-spacing:0.961px;color:#ededed;left:1219.96px;width:94px;text-align:right;overflow:hidden;">6</div>
<div style="left:1219px;top:146px;width:96px;height:16px;border:1px solid #575757;background:transparent;"></div>
<div style="left:1220px;top:147px;width:52px;height:16px;background:#3a7dbe;"></div>
<div class="t" style="top:145px;height:20px;line-height:20px;letter-spacing:0.961px;color:#ededed;left:1219.96px;width:94px;text-align:right;overflow:hidden;">6</div>
<div style="left:1219px;top:166px;width:96px;height:16px;border:1px solid #575757;background:transparent;"></div>
<div style="left:1220px;top:167px;width:35px;height:16px;background:#3a7dbe;"></div>
<div class="t" style="top:165px;height:20px;line-height:20px;letter-spacing:0.961px;color:#ededed;left:1219.96px;width:94px;text-align:right;overflow:hidden;">4</div>
<div style="left:1219px;top:186px;width:96px;height:16px;border:1px solid #575757;background:transparent;"></div>
<div style="left:1220px;top:187px;width:26px;height:16px;background:#3a7dbe;"></div>
<div class="t" style="top:185px;height:20px;line-height:20px;letter-spacing:0.961px;color:#ededed;left:1219.96px;width:94px;text-align:right;overflow:hidden;">3</div>
<div style="left:1219px;top:206px;width:96px;height:16px;border:1px solid #575757;background:transparent;"></div>
<div style="left:1220px;top:207px;width:61px;height:16px;background:#3a7dbe;"></div>
<div class="t" style="top:205px;height:20px;line-height:20px;letter-spacing:0.961px;color:#ededed;left:1219.96px;width:94px;text-align:right;overflow:hidden;">7</div>
<div style="left:1218px;top:225px;width:225px;height:20px;background:#3e3e30;"></div>
<div style="left:1219px;top:226px;width:96px;height:16px;border:1px solid #5c5c4c;background:transparent;"></div>
<div style="left:1220px;top:227px;width:35px;height:16px;background:#3a7dbe;"></div>
<div class="t" style="top:225px;height:20px;line-height:20px;letter-spacing:0.961px;color:#ededed;left:1219.96px;width:94px;text-align:right;overflow:hidden;">4</div>
<div style="left:1219px;top:246px;width:96px;height:16px;border:1px solid #575757;background:transparent;"></div>
<div style="left:1220px;top:247px;width:44px;height:16px;background:#3a7dbe;"></div>
<div class="t" style="top:245px;height:20px;line-height:20px;letter-spacing:0.961px;color:#ededed;left:1219.96px;width:94px;text-align:right;overflow:hidden;">5</div>
<div style="left:1218px;top:265px;width:225px;height:20px;background:#3e3e30;"></div>
<div style="left:1219px;top:266px;width:96px;height:16px;border:1px solid #5c5c4c;background:transparent;"></div>
<div style="left:1220px;top:267px;width:35px;height:16px;background:#3a7dbe;"></div>
<div class="t" style="top:265px;height:20px;line-height:20px;letter-spacing:0.961px;color:#ededed;left:1219.96px;width:94px;text-align:right;overflow:hidden;">4</div>
<div style="left:1219px;top:286px;width:96px;height:16px;border:1px solid #575757;background:transparent;"></div>
<div style="left:1220px;top:287px;width:9px;height:16px;background:#3a7dbe;"></div>
<div class="t" style="top:285px;height:20px;line-height:20px;letter-spacing:0.961px;color:#ededed;left:1219.96px;width:94px;text-align:right;overflow:hidden;">1</div>
<div style="left:1219px;top:306px;width:96px;height:16px;border:1px solid #575757;background:transparent;"></div>
<div style="left:1220px;top:307px;width:44px;height:16px;background:#3a7dbe;"></div>
<div class="t" style="top:305px;height:20px;line-height:20px;letter-spacing:0.961px;color:#ededed;left:1219.96px;width:94px;text-align:right;overflow:hidden;">5</div>
<div style="left:1219px;top:326px;width:96px;height:16px;border:1px solid #575757;background:transparent;"></div>
<div style="left:1220px;top:327px;width:44px;height:16px;background:#3a7dbe;"></div>
<div class="t" style="top:325px;height:20px;line-height:20px;letter-spacing:0.961px;color:#ededed;left:1219.96px;width:94px;text-align:right;overflow:hidden;">5</div>
<div style="left:1218px;top:345px;width:225px;height:20px;background:#3e3e30;"></div>
<div style="left:1219px;top:346px;width:96px;height:16px;border:1px solid #5c5c4c;background:transparent;"></div>
<div style="left:1220px;top:347px;width:44px;height:16px;background:#3a7dbe;"></div>
<div class="t" style="top:345px;height:20px;line-height:20px;letter-spacing:0.961px;color:#ededed;left:1219.96px;width:94px;text-align:right;overflow:hidden;">5</div>
<div style="left:1218px;top:365px;width:225px;height:20px;background:#3e3e30;"></div>
<div style="left:1219px;top:366px;width:96px;height:16px;border:1px solid #5c5c4c;background:transparent;"></div>
<div style="left:1220px;top:367px;width:52px;height:16px;background:#3a7dbe;"></div>
<div class="t" style="top:365px;height:20px;line-height:20px;letter-spacing:0.961px;color:#ededed;left:1219.96px;width:94px;text-align:right;overflow:hidden;">6</div>
<div style="left:1218px;top:385px;width:225px;height:20px;background:#3e3e30;"></div>
<div style="left:1219px;top:386px;width:96px;height:16px;border:1px solid #5c5c4c;background:transparent;"></div>
<div style="left:1220px;top:387px;width:35px;height:16px;background:#3a7dbe;"></div>
<div class="t" style="top:385px;height:20px;line-height:20px;letter-spacing:0.961px;color:#ededed;left:1219.96px;width:94px;text-align:right;overflow:hidden;">4</div>
<div style="left:1219px;top:406px;width:96px;height:16px;border:1px solid #575757;background:transparent;"></div>
<div style="left:1220px;top:407px;width:26px;height:16px;background:#3a7dbe;"></div>
<div class="t" style="top:405px;height:20px;line-height:20px;letter-spacing:0.961px;color:#ededed;left:1219.96px;width:94px;text-align:right;overflow:hidden;">3</div>
<div style="left:1219px;top:426px;width:96px;height:16px;border:1px solid #575757;background:transparent;"></div>
<div style="left:1220px;top:427px;width:9px;height:16px;background:#3a7dbe;"></div>
<div class="t" style="top:425px;height:20px;line-height:20px;letter-spacing:0.961px;color:#ededed;left:1219.96px;width:94px;text-align:right;overflow:hidden;">1</div>
<div style="left:1218px;top:451px;width:224px;height:13px;background:#3a3a3a;"></div>
<div style="left:1218px;top:451px;width:11px;height:11px;border:1px solid #585858;background:#3d3d3d;"></div>
<div style="left:1222px;top:453px;width:0;height:0;border-top:4px solid transparent;border-bottom:4px solid transparent;border-right:4.5px solid #c4c4c4"></div>
<div style="left:1233px;top:451px;width:31px;height:11px;border:1px solid #585858;background:#454545;"></div>
<div style="left:1429px;top:451px;width:11px;height:11px;border:1px solid #585858;background:#3d3d3d;"></div>
<div style="left:1433px;top:453px;width:0;height:0;border-top:4px solid transparent;border-bottom:4px solid transparent;border-left:4.5px solid #c4c4c4"></div>
<div style="left:1443px;top:13px;width:13px;height:437px;background:#3a3a3a;"></div>
<div style="left:1443px;top:13px;width:11px;height:11px;border:1px solid #585858;background:#3d3d3d;"></div>
<div style="left:1445px;top:17px;width:0;height:0;border-left:4px solid transparent;border-right:4px solid transparent;border-bottom:4.5px solid #c4c4c4"></div>
<div style="left:1443px;top:39px;width:11px;height:326px;border:1px solid #585858;background:#454545;"></div>
<div style="left:1443px;top:437px;width:11px;height:11px;border:1px solid #585858;background:#3d3d3d;"></div>
<div style="left:1445px;top:441px;width:0;height:0;border-left:4px solid transparent;border-right:4px solid transparent;border-top:4.5px solid #c4c4c4"></div>
<div style="left:1442px;top:450px;width:14px;height:14px;background:#333333;"></div>
<div style="left:1466px;top:24px;width:7px;height:17px;background:#b8235a;"></div>
<div style="left:1466px;top:41px;width:7px;height:17px;background:#e14a05;"></div>
<div style="left:1466px;top:58px;width:7px;height:18px;background:#ff6e00;"></div>
<div style="left:1466px;top:76px;width:7px;height:17px;background:#ffab3d;"></div>
<div style="left:1466px;top:93px;width:7px;height:17px;background:#ffd683;"></div>
<div style="left:1466px;top:110px;width:7px;height:17px;background:#ffd683;"></div>
<div style="left:1466px;top:127px;width:7px;height:17px;background:#fb881d;"></div>
<div style="left:1466px;top:144px;width:7px;height:18px;background:#ff6a00;"></div>
<div style="left:1466px;top:162px;width:7px;height:17px;background:#ffffff;"></div>
<div style="left:1466px;top:179px;width:7px;height:17px;background:#fb881d;"></div>
<div style="left:1459px;top:179px;width:7px;height:17px;background:#9a9a20;"></div>
<div style="left:1466px;top:196px;width:7px;height:17px;background:#ffab3d;"></div>
<div style="left:1466px;top:213px;width:7px;height:17px;background:#fb881d;"></div>
<div style="left:1459px;top:213px;width:7px;height:17px;background:#9a9a20;"></div>
<div style="left:1466px;top:230px;width:7px;height:18px;background:#b8235a;"></div>
<div style="left:1466px;top:248px;width:7px;height:17px;background:#ffab3d;"></div>
<div style="left:1466px;top:265px;width:7px;height:17px;background:#ffab3d;"></div>
<div style="left:1466px;top:282px;width:7px;height:17px;background:#ffab3d;"></div>
<div style="left:1459px;top:282px;width:7px;height:17px;background:#9a9a20;"></div>
<div style="left:1466px;top:299px;width:7px;height:17px;background:#ffd683;"></div>
<div style="left:1459px;top:299px;width:7px;height:17px;background:#9a9a20;"></div>
<div style="left:1466px;top:316px;width:7px;height:18px;background:#fb881d;"></div>
<div style="left:1459px;top:316px;width:7px;height:18px;background:#9a9a20;"></div>
<div style="left:1466px;top:334px;width:7px;height:17px;background:#ff6a00;"></div>
<div style="left:1466px;top:351px;width:7px;height:17px;background:#b8235a;"></div>
<div class="t" style="top:468px;height:20px;line-height:20px;letter-spacing:0.617px;color:#f0f0f0;left:16px;">Inline Functions</div>
<div style="left:12px;top:488px;width:102px;height:3px;background:#0a7ed7;"></div>
<div class="t" style="top:468px;height:20px;line-height:20px;letter-spacing:0.576px;color:#a8a8a8;left:124px;">Source Markers</div>
<div style="left:120px;top:488px;width:101px;height:3px;background:#777777;"></div>
<div class="t" style="top:468px;height:20px;line-height:20px;letter-spacing:0.684px;color:#a8a8a8;left:239px;">Statistics</div>
<div style="left:227px;top:488px;width:80px;height:3px;background:#777777;"></div>
<div style="left:12px;top:497px;width:656px;height:129px;background:#202020;"></div>
<div style="left:13px;top:498px;width:654px;height:127px;background:#2a2a2a;"></div>
<div style="left:13px;top:498px;width:51px;height:31px;background:#414141;"></div>
<div style="left:13px;top:498px;width:51px;height:1px;background:#4d4d4d;"></div>
<div style="left:63px;top:498px;width:1px;height:31px;background:#5a5a5a;"></div>
<div class="t" style="left:34px;top:497px;height:20px;line-height:20px;color:#ededed;transform:scaleX(1.35);transform-origin:0 0">#</div>
<div style="left:64px;top:498px;width:434px;height:31px;background:#414141;"></div>
<div style="left:64px;top:498px;width:434px;height:1px;background:#4d4d4d;"></div>
<div style="left:497px;top:498px;width:1px;height:31px;background:#5a5a5a;"></div>
<div class="t" style="top:497px;height:20px;line-height:20px;letter-spacing:0.533px;color:#ededed;left:67px;width:430px;overflow:hidden;">Source</div>
<div style="left:498px;top:498px;width:169px;height:31px;background:#414141;"></div>
<div style="left:498px;top:498px;width:169px;height:1px;background:#4d4d4d;"></div>
<div class="t" style="top:497px;height:20px;line-height:20px;letter-spacing:0.533px;color:#ededed;left:501px;width:165px;overflow:hidden;">Source</div>
<div class="t" style="top:511px;height:20px;line-height:20px;letter-spacing:0.187px;color:#ededed;left:501px;width:165px;overflow:hidden;">File</div>
<div style="left:13px;top:529px;width:654px;height:1px;background:#202020;"></div>
<div style="left:13px;top:530px;width:17px;height:19px;background:#414141;"></div>
<div style="left:13px;top:530px;width:17px;height:1px;background:#4e4e4e;"></div>
<div class="t" style="top:530px;height:20px;line-height:20px;letter-spacing:0.961px;color:#1e85d4;left:34px;text-decoration:underline;">41</div>
<div class="t" style="top:530px;height:20px;line-height:20px;letter-spacing:1.037px;color:#ededed;left:69px;width:427px;overflow:hidden;"><span style="color:#4f9fe3">return</span> <span style="color:#4f9fe3">Add</span>(a, b);</div>
<div class="t" style="top:530px;height:20px;line-height:20px;letter-spacing:0.602px;color:#ededed;left:502px;width:160px;overflow:hidden;">CuInlineFunctions.cu</div>
<div style="left:13px;top:550px;width:17px;height:19px;background:#414141;"></div>
<div style="left:13px;top:550px;width:17px;height:1px;background:#4e4e4e;"></div>
<div class="t" style="top:550px;height:20px;line-height:20px;letter-spacing:0.961px;color:#1e85d4;left:34px;text-decoration:underline;">62</div>
<div class="t" style="top:550px;height:20px;line-height:20px;letter-spacing:1.037px;color:#ededed;left:69px;width:427px;overflow:hidden;"><span style="color:#4f9fe3">return</span> <span style="color:#4f9fe3">Add</span>(a, b);</div>
<div class="t" style="top:550px;height:20px;line-height:20px;letter-spacing:0.602px;color:#ededed;left:502px;width:160px;overflow:hidden;">CuInlineFunctions.cu</div>
<div style="left:13px;top:570px;width:17px;height:19px;background:#414141;"></div>
<div style="left:13px;top:570px;width:17px;height:1px;background:#4e4e4e;"></div>
<div class="t" style="top:570px;height:20px;line-height:20px;letter-spacing:0.961px;color:#1e85d4;left:34px;text-decoration:underline;">25</div>
<div class="t" style="top:570px;height:20px;line-height:20px;letter-spacing:1.389px;color:#ededed;left:69px;width:427px;overflow:hidden;">C[i] = <span style="color:#4f9fe3">Add</span>(A[i], B[i]);</div>
<div class="t" style="top:570px;height:20px;line-height:20px;letter-spacing:0.602px;color:#ededed;left:502px;width:160px;overflow:hidden;">CuInlineFunctions.cu</div>
<div style="left:13px;top:590px;width:17px;height:19px;background:#414141;"></div>
<div style="left:13px;top:590px;width:17px;height:1px;background:#4e4e4e;"></div>
<div class="t" style="top:590px;height:20px;line-height:20px;letter-spacing:0.961px;color:#1e85d4;left:34px;text-decoration:underline;">33</div>
<div class="t" style="top:590px;height:20px;line-height:20px;letter-spacing:1.366px;color:#ededed;left:69px;width:427px;overflow:hidden;">C[i] = <span style="color:#4f9fe3">Add</span>(A[i], B[i]) + <span style="color:#4f9fe3">Add</span>(A[i], B[i]) + <span style="color:#4f9fe3">Add</span>(A[i], B[i]) + <span style="color:#4f9fe3">Add</span>(A[i], B[i]);</div>
<div class="t" style="top:590px;height:20px;line-height:20px;letter-spacing:0.602px;color:#ededed;left:502px;width:160px;overflow:hidden;">CuInlineFunctions.cu</div>
<div style="left:13px;top:612px;width:654px;height:13px;background:#3a3a3a;"></div>
<div style="left:13px;top:612px;width:11px;height:11px;border:1px solid #585858;background:#3d3d3d;"></div>
<div style="left:17px;top:614px;width:0;height:0;border-top:4px solid transparent;border-bottom:4px solid transparent;border-right:4.5px solid #c4c4c4"></div>
<div style="left:27px;top:612px;width:624px;height:11px;border:1px solid #585858;background:#454545;"></div>
<div style="left:654px;top:612px;width:11px;height:11px;border:1px solid #585858;background:#3d3d3d;"></div>
<div style="left:658px;top:614px;width:0;height:0;border-top:4px solid transparent;border-bottom:4px solid transparent;border-left:4.5px solid #c4c4c4"></div>
<div style="left:667px;top:497px;width:8px;height:129px;background:#333333;"></div>
<div style="left:667px;top:497px;width:1px;height:129px;background:#282828;"></div>
<div style="left:672px;top:497px;width:1px;height:129px;background:#4c4c4c;"></div>
<div style="left:673px;top:497px;width:2px;height:129px;background:#2f2f2f;"></div>
<div style="left:675px;top:497px;width:798px;height:129px;background:#202020;"></div>
<div style="left:675px;top:498px;width:798px;height:127px;background:#2a2a2a;"></div>
<div style="left:675px;top:498px;width:203px;height:31px;background:#414141;"></div>
<div style="left:675px;top:498px;width:203px;height:1px;background:#4d4d4d;"></div>
<div style="left:877px;top:498px;width:1px;height:31px;background:#5a5a5a;"></div>
<div class="t" style="top:497px;height:20px;line-height:20px;letter-spacing:0.641px;color:#ededed;left:677px;width:200px;overflow:hidden;">Inline Function</div>
<div class="t" style="top:511px;height:20px;line-height:20px;letter-spacing:0.538px;color:#ededed;left:677px;width:200px;overflow:hidden;">Address</div>
<div style="left:878px;top:498px;width:100px;height:31px;background:#414141;"></div>
<div style="left:878px;top:498px;width:100px;height:1px;background:#4d4d4d;"></div>
<div style="left:977px;top:498px;width:1px;height:31px;background:#5a5a5a;"></div>
<div class="t" style="top:497px;height:20px;line-height:20px;letter-spacing:0.623px;color:#ededed;left:878.62px;width:98px;text-align:right;overflow:hidden;">Live</div>
<div class="t" style="top:511px;height:20px;line-height:20px;letter-spacing:0.553px;color:#ededed;left:878.55px;width:98px;text-align:right;overflow:hidden;">Registers</div>
<div style="left:978px;top:498px;width:100px;height:31px;background:#414141;"></div>
<div style="left:978px;top:498px;width:100px;height:1px;background:#4d4d4d;"></div>
<div style="left:1077px;top:498px;width:1px;height:31px;background:#5a5a5a;"></div>
<div class="t" style="top:497px;height:20px;line-height:20px;letter-spacing:0.760px;color:#ededed;left:978.76px;width:98px;text-align:right;overflow:hidden;">Instructions</div>
<div class="t" style="top:511px;height:20px;line-height:20px;letter-spacing:0.697px;color:#ededed;left:978.70px;width:98px;text-align:right;overflow:hidden;">Executed</div>
<div style="left:1078px;top:498px;width:100px;height:31px;background:#414141;"></div>
<div style="left:1078px;top:498px;width:100px;height:1px;background:#4d4d4d;"></div>
<div style="left:1177px;top:498px;width:1px;height:31px;background:#5a5a5a;"></div>
<div class="t" style="top:497px;height:20px;line-height:20px;letter-spacing:0.690px;color:#ededed;left:1078.69px;width:98px;text-align:right;overflow:hidden;">p Stall Sampling</div>
<div class="t" style="top:511px;height:20px;line-height:20px;letter-spacing:0.536px;color:#ededed;left:1078.54px;width:98px;text-align:right;overflow:hidden;">(All Cycles)</div>
<div style="left:1178px;top:498px;width:100px;height:31px;background:#414141;"></div>
<div style="left:1178px;top:498px;width:100px;height:1px;background:#4d4d4d;"></div>
<div style="left:1277px;top:498px;width:1px;height:31px;background:#5a5a5a;"></div>
<div class="t" style="top:497px;height:20px;line-height:20px;letter-spacing:0.690px;color:#ededed;left:1178.69px;width:98px;text-align:right;overflow:hidden;">p Stall Sampling</div>
<div class="t" style="top:511px;height:20px;line-height:20px;letter-spacing:0.604px;color:#ededed;left:1178.60px;width:98px;text-align:right;overflow:hidden;">t-issued Cycles)</div>
<div style="left:1278px;top:498px;width:100px;height:31px;background:#414141;"></div>
<div style="left:1278px;top:498px;width:100px;height:1px;background:#4d4d4d;"></div>
<div style="left:1377px;top:498px;width:1px;height:31px;background:#5a5a5a;"></div>
<div class="t" style="top:497px;height:20px;line-height:20px;letter-spacing:0.538px;color:#ededed;left:1278.54px;width:98px;text-align:right;overflow:hidden;">Address</div>
<div class="t" style="top:511px;height:20px;line-height:20px;letter-spacing:0.509px;color:#ededed;left:1278.51px;width:98px;text-align:right;overflow:hidden;">Space</div>
<div style="left:1378px;top:498px;width:95px;height:31px;overflow:hidden">
<div style="left:0px;top:0px;width:100px;height:31px;background:#414141;"></div>
<div style="left:0px;top:0px;width:100px;height:1px;background:#4d4d4d;"></div>
<div class="t" style="top:-1px;height:20px;line-height:20px;letter-spacing:0.401px;color:#ededed;left:0.40px;width:98px;text-align:right;overflow:hidden;">Access</div>
<div class="t" style="top:13px;height:20px;line-height:20px;letter-spacing:0.780px;color:#ededed;left:0.78px;width:98px;text-align:right;overflow:hidden;">Operation</div>
</div>
<div style="left:675px;top:529px;width:798px;height:1px;background:#202020;"></div>
<div class="t" style="top:530px;height:20px;line-height:20px;letter-spacing:0.873px;color:#1e85d4;left:678px;text-decoration:underline;">0000000c 00c5a590</div>
<div style="left:880px;top:531px;width:96px;height:16px;border:1px solid #575757;background:transparent;"></div>
<div style="left:881px;top:532px;width:96px;height:16px;background:#3a7dbe;"></div>
<div class="t" style="top:530px;height:20px;line-height:20px;letter-spacing:0.961px;color:#ededed;left:880.96px;width:94px;text-align:right;overflow:hidden;">6</div>
<div class="t" style="top:550px;height:20px;line-height:20px;letter-spacing:0.885px;color:#1e85d4;left:678px;text-decoration:underline;">0000000c 00c59bf0</div>
<div style="left:880px;top:551px;width:96px;height:16px;border:1px solid #575757;background:transparent;"></div>
<div style="left:881px;top:552px;width:96px;height:16px;background:#3a7dbe;"></div>
<div class="t" style="top:550px;height:20px;line-height:20px;letter-spacing:0.961px;color:#ededed;left:880.96px;width:94px;text-align:right;overflow:hidden;">6</div>
<div class="t" style="top:570px;height:20px;line-height:20px;letter-spacing:0.888px;color:#1e85d4;left:678px;text-decoration:underline;">0000000c 00c5b8b0</div>
<div style="left:880px;top:571px;width:96px;height:16px;border:1px solid #575757;background:transparent;"></div>
<div style="left:881px;top:572px;width:48px;height:16px;background:#3a7dbe;"></div>
<div class="t" style="top:570px;height:20px;line-height:20px;letter-spacing:0.961px;color:#ededed;left:880.96px;width:94px;text-align:right;overflow:hidden;">3</div>
<div style="left:980px;top:571px;width:96px;height:16px;border:1px solid #575757;background:transparent;"></div>
<div style="left:981px;top:572px;width:96px;height:16px;background:#3a7dbe;"></div>
<div class="t" style="top:570px;height:20px;line-height:20px;letter-spacing:0.860px;color:#ededed;left:984.86px;width:90px;text-align:right;overflow:hidden;">100.00%</div>
<div class="t" style="top:570px;height:20px;line-height:20px;letter-spacing:0.860px;color:#ededed;left:1084px;">100.00%</div>
<div style="left:1141px;top:572px;width:37px;height:16px;background:#7e6f66;"></div>
<div class="t" style="top:570px;height:20px;line-height:20px;letter-spacing:0.860px;color:#ededed;left:1184px;">100.00%</div>
<div style="left:1241px;top:572px;width:37px;height:16px;background:#7e6f66;"></div>
<div class="t" style="top:590px;height:20px;line-height:20px;letter-spacing:0.858px;color:#1e85d4;left:678px;text-decoration:underline;">0000000c 00c5aeb0</div>
<div style="left:880px;top:591px;width:96px;height:16px;border:1px solid #575757;background:transparent;"></div>
<div style="left:881px;top:592px;width:48px;height:16px;background:#3a7dbe;"></div>
<div class="t" style="top:590px;height:20px;line-height:20px;letter-spacing:0.961px;color:#ededed;left:880.96px;width:94px;text-align:right;overflow:hidden;">3</div>
<div style="left:675px;top:612px;width:798px;height:13px;background:#3a3a3a;"></div>
<div style="left:675px;top:612px;width:11px;height:11px;border:1px solid #585858;background:#3d3d3d;"></div>
<div style="left:679px;top:614px;width:0;height:0;border-top:4px solid transparent;border-bottom:4px solid transparent;border-right:4.5px solid #c4c4c4"></div>
<div style="left:690px;top:612px;width:607px;height:11px;border:1px solid #585858;background:#454545;"></div>
<div style="left:1460px;top:612px;width:11px;height:11px;border:1px solid #585858;background:#3d3d3d;"></div>
<div style="left:1464px;top:614px;width:0;height:0;border-top:4px solid transparent;border-bottom:4px solid transparent;border-left:4.5px solid #c4c4c4"></div>
</body></html>
